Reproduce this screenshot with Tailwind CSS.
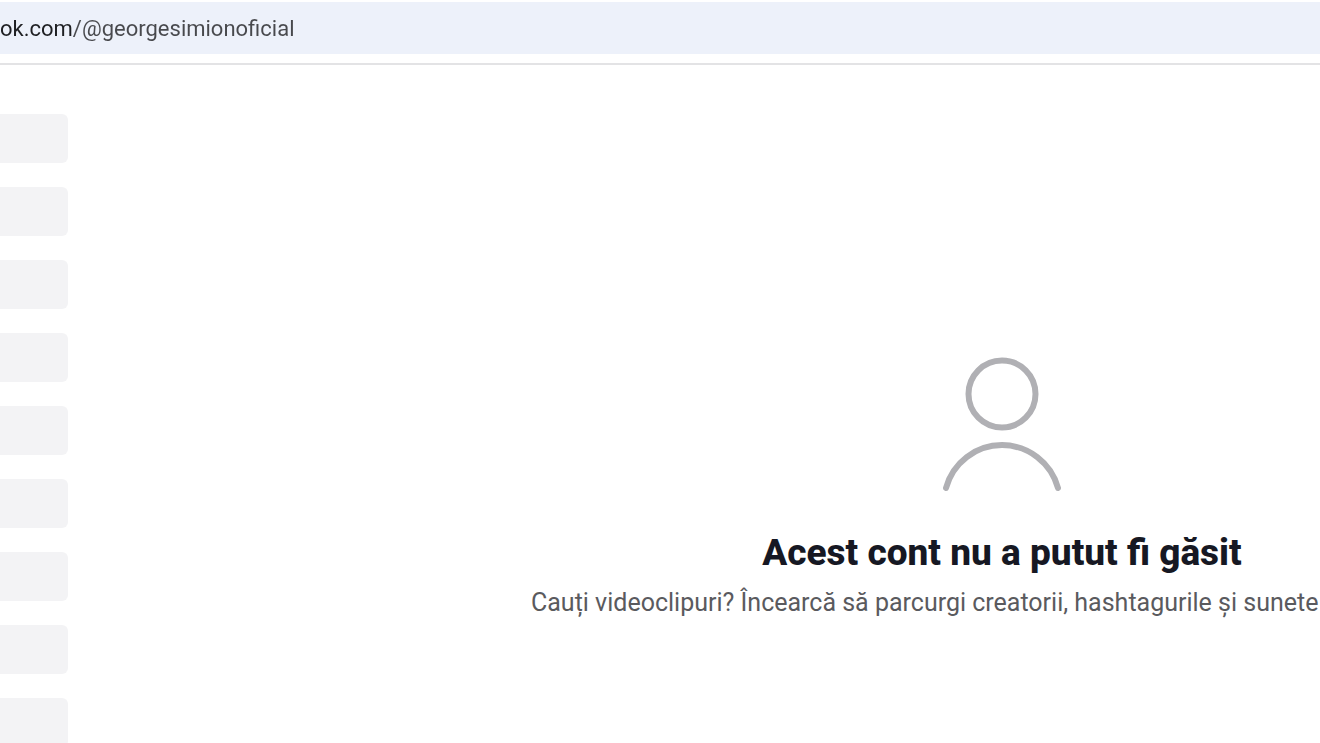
<!DOCTYPE html>
<html lang="ro">
<head>
    <meta charset="UTF-8">
    <meta name="viewport" content="width=device-width, initial-scale=1.0">
    <title>Acest cont nu a putut fi găsit</title>
    <script src="https://cdn.jsdelivr.net/npm/@tailwindcss/browser@4"></script>
</head>
<body class="h-screen overflow-hidden flex flex-col bg-white font-['Roboto',sans-serif]">
    <header class="shrink-0 border-b-2 border-[#e3e3e5] pt-0.5 pb-[9px]">
        <div class="h-[52px] bg-[#edf1fa] flex items-center">
            <!-- domain is darker than the path -->
            <input type="text" aria-label="Adresă" value="ok.com/@georgesimionoficial" class="w-full outline-none text-[22px] text-transparent bg-clip-text bg-[linear-gradient(to_right,#1f2023_72px,#48494d_72px)]">
        </div>
    </header>

    <div class="flex flex-1 min-h-0 overflow-hidden">
        <aside class="w-[68px] shrink-0 flex flex-col gap-6 pt-[49px]">
            <div class="h-[49px] shrink-0 rounded-r-md bg-[#f3f3f5]"></div>
            <div class="h-[49px] shrink-0 rounded-r-md bg-[#f3f3f5]"></div>
            <div class="h-[49px] shrink-0 rounded-r-md bg-[#f3f3f5]"></div>
            <div class="h-[49px] shrink-0 rounded-r-md bg-[#f3f3f5]"></div>
            <div class="h-[49px] shrink-0 rounded-r-md bg-[#f3f3f5]"></div>
            <div class="h-[49px] shrink-0 rounded-r-md bg-[#f3f3f5]"></div>
            <div class="h-[49px] shrink-0 rounded-r-md bg-[#f3f3f5]"></div>
            <div class="h-[49px] shrink-0 rounded-r-md bg-[#f3f3f5]"></div>
            <div class="h-[49px] shrink-0 rounded-r-md bg-[#f3f3f5]"></div>
        </aside>

        <!-- the page is wider than the window, its centre stays right of the middle -->
        <main class="w-[calc(100%+548px)] shrink-0 flex flex-col items-center pt-[291px]">
            <svg class="w-[120px] h-[136px]" viewBox="0 0 120 136" fill="none" stroke="#b0b0b4" stroke-width="6" stroke-linecap="round" aria-hidden="true">
                <circle cx="60" cy="38" r="33.5"/>
                <path d="M4 132a58 58 0 0 1 112 0"/>
            </svg>
            <h1 class="mt-[37px] text-[37px] leading-[48px] font-extrabold text-[#161823]">Acest cont nu a putut fi găsit</h1>
            <p class="mt-2 w-[942px] text-[25px] leading-9 text-[#5a5a5e] whitespace-nowrap">Cauți videoclipuri? Încearcă să parcurgi creatorii, hashtagurile și sunete</p>
        </main>
    </div>
</body>
</html>
